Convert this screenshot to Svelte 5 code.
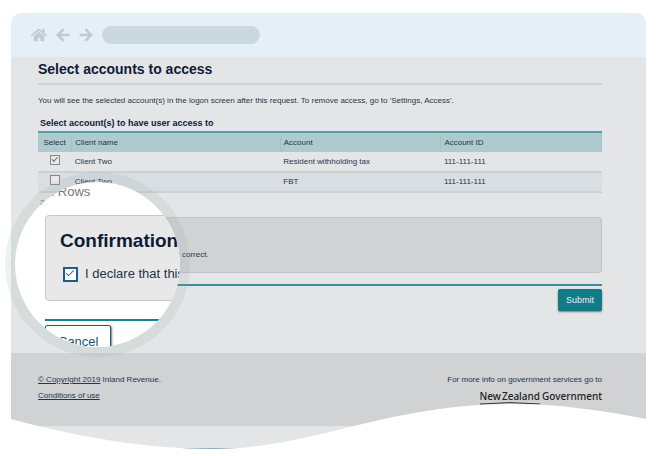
<script>
  const rows = [
    { id: 1, client: 'Client Two', account: 'Resident withholding tax', accountId: '111-111-111', selected: true },
    { id: 2, client: 'Client Two', account: 'FBT', accountId: '111-111-111', selected: false },
  ];

  let accounts = $state(rows);
  let declared = $state(true);
</script>

<div class="browser">
  <header class="toolbar">
    <button class="nav-button" aria-label="Home">
      <svg width="16" height="14" viewBox="0 32 576 448" fill="currentColor">
        <path d="M280.37 148.26L96 300.11V464a16 16 0 0 0 16 16l112.06-.29a16 16 0 0 0 15.92-16V368a16 16 0 0 1 16-16h64a16 16 0 0 1 16 16v95.64a16 16 0 0 0 16 16.05L464 480a16 16 0 0 0 16-16V300L295.67 148.26a12.19 12.19 0 0 0-15.3 0zM571.6 251.47L488 182.56V44.05a12 12 0 0 0-12-12h-56a12 12 0 0 0-12 12v72.61L318.47 43a48 48 0 0 0-61 0L4.34 251.47a12 12 0 0 0-1.6 16.9l25.5 31A12 12 0 0 0 45.15 301l235.22-193.74a12.19 12.19 0 0 1 15.3 0L530.9 301a12 12 0 0 0 16.9-1.6l25.5-31a12 12 0 0 0-1.7-16.93z" />
      </svg>
    </button>
    <button class="nav-button" aria-label="Back">
      <svg width="14" height="14" viewBox="0 0 14 14" fill="none" stroke="currentColor" stroke-width="2.5">
        <path d="M7.6 1.2 1.8 7l5.8 5.8M2 7h11.4" />
      </svg>
    </button>
    <button class="nav-button" aria-label="Forward">
      <svg width="14" height="14" viewBox="0 0 14 14" fill="none" stroke="currentColor" stroke-width="2.5">
        <path d="M6.4 1.2 12.2 7l-5.8 5.8M12 7H.6" />
      </svg>
    </button>
    <input class="address" type="text" aria-label="Address" />
  </header>

  <main class="page">
    <h1>Select accounts to access</h1>
    <p class="intro">
      You will see the selected account(s) in the logon screen after this request. To remove access, go to 'Settings, Access'.
    </p>

    <table>
      <caption>Select account(s) to have user access to</caption>
      <thead>
        <tr>
          <th class="col-select">Select</th>
          <th class="col-client">Client name</th>
          <th class="col-account">Account</th>
          <th>Account ID</th>
        </tr>
      </thead>
      <tbody>
        {#each accounts as row (row.id)}
          <tr>
            <td class="tick"><input type="checkbox" bind:checked={row.selected} aria-label={row.account} /></td>
            <td>{row.client}</td>
            <td>{row.account}</td>
            <td>{row.accountId}</td>
          </tr>
        {/each}
      </tbody>
    </table>
    <p class="count">2 Rows</p>

    <section class="panel" aria-label="Confirmation">
      <label>
        <input type="checkbox" bind:checked={declared} />
        I declare that this information is correct.
      </label>
    </section>

    <div class="actions">
      <button class="submit">Submit</button>
    </div>
  </main>

  <footer>
    <div class="legal">
      <span><a href="#copyright">© Copyright 2019</a> Inland Revenue.</span>
      <a href="#conditions">Conditions of use</a>
    </div>
    <div class="govt">
      <span>For more info on government services go to</span>
      <div class="logo">
        <span class="country"><span>New</span><span>Zealand</span>
          <svg viewBox="0 0 61 4" preserveAspectRatio="none" fill="none" stroke="#333" stroke-width="1">
            <path d="M0 3Q30 .2 61 3" />
          </svg>
        </span>
        <span>Government</span>
      </div>
    </div>
  </footer>
  <div class="page-end"></div>

  <!-- Wavy bottom edge of the page -->
  <svg class="wave" viewBox="0 0 635 52" preserveAspectRatio="none">
    <path fill="#fff" d="M0 19C70 38 140 49 201 49C245 49 280 41 319 32C380 17 430 4 504 4C545 4 590 10 635 19V52H0Z" />
  </svg>

  <!-- Magnifier over the confirmation panel -->
  <div class="lens">
    <div class="zoomed">
      <p class="zoomed-count">2 Rows</p>
      <section class="zoomed-panel">
        <h2>Confirmation</h2>
        <label>
          <input type="checkbox" bind:checked={declared} />
          I declare that this
        </label>
      </section>
      <div class="zoomed-actions">
        <button class="cancel">Cancel</button>
      </div>
    </div>
  </div>
</div>

<style>
  :global(body) {
    margin: 0;
    background: #fff;
  }

  .browser {
    position: relative;
    margin: 13px 13px 0 11px;
    font-family: "Liberation Sans", Arial, sans-serif;
    font-size: 8px;
    line-height: 12px;
    color: #27344a;
  }

  h1, h2, p {
    margin: 0;
  }

  button, input {
    font-family: inherit;
    margin: 0;
  }

  /* Browser bar */
  .toolbar {
    display: flex;
    align-items: center;
    height: 44px;
    padding: 0 20px;
    gap: 9px;
    background: #e5f0f6;
    border-radius: 10px 10px 0 0;
  }

  .nav-button {
    display: flex;
    padding: 0;
    border: 0;
    background: none;
    color: #bccbd4;
  }

  .address {
    width: 26.5%;
    height: 18px;
    box-sizing: border-box;
    padding: 0 9px;
    border: 0;
    border-radius: 9px;
    background: #cad8e1;
  }

  /* Page */
  .page {
    display: flex;
    flex-direction: column;
    padding: 0 44px 42px 27px;
    background: #e4e5e7;
  }

  h1 {
    padding: 3px 0 5px;
    border-bottom: 2px solid #d0d1d3;
    font-size: 14px;
    line-height: 18px;
    color: #0f1b36;
  }

  .intro {
    margin: 10px 0;
  }

  table {
    width: 100%;
    table-layout: fixed;
    border-collapse: collapse;
  }

  caption {
    padding: 0 2px 2px;
    text-align: left;
    font-size: 9px;
    font-weight: bold;
    color: #0f1b36;
  }

  th, td {
    box-sizing: border-box;
    height: 20px;
    padding: 0 3px;
  }

  th {
    border-top: 2px solid #55a0a8;
    border-right: 1px solid #a1c3c7;
    background: #aecace;
    text-align: left;
    font-weight: normal;
  }

  .col-select {
    width: 6%;
    text-align: center;
  }

  .col-client {
    width: 37%;
  }

  .col-account {
    width: 28.5%;
  }

  td {
    border-bottom: 2px solid #cdd1d4;
  }

  tbody tr:nth-child(even) {
    background: #d9dee3;
  }

  .tick {
    padding-bottom: 4px;
  }

  input[type="checkbox"] {
    appearance: none;
    display: block;
    flex: none;
    box-sizing: border-box;
    width: 10px;
    height: 10px;
    border: 1px solid #85898d;
    background: #e8e9ea;
  }

  .tick input {
    margin: 0 auto;
  }

  /* Tick mark */
  input[type="checkbox"]:checked::after {
    content: '';
    display: block;
    width: 66%;
    height: 30%;
    margin: 14% auto 0;
    border: solid #596168;
    border-width: 0 0 1px 1px;
    transform: rotate(-45deg);
  }

  .count {
    margin: 4px 2px 8px;
    color: #777;
  }

  .panel {
    display: flex;
    align-items: flex-end;
    box-sizing: border-box;
    height: 56px;
    padding: 11px 12px;
    border: 1px solid #c3c4c6;
    border-radius: 3px;
    background: #d1d2d4;
  }

  label {
    display: flex;
    align-items: center;
    gap: 8px;
  }

  .actions {
    display: flex;
    justify-content: flex-end;
    margin-top: 11px;
    padding-top: 3px;
    border-top: 2px solid #3d8e98;
  }

  .submit {
    padding: 5px 8px;
    border: 0;
    border-radius: 2px;
    background: #117b87;
    box-shadow: 0 1px 2px #777;
    font-size: 9px;
    line-height: 12px;
    color: #e9f4f5;
  }

  /* Footer */
  footer {
    display: flex;
    justify-content: space-between;
    box-sizing: border-box;
    min-height: 73px;
    padding: 21px 44px 0 27px;
    background: #d1d2d4;
  }

  footer a {
    color: inherit;
  }

  .legal, .govt {
    display: flex;
    flex-direction: column;
    gap: 4px;
  }

  .govt {
    align-items: flex-end;
  }

  .logo {
    display: flex;
    gap: 2px;
    font-family: "Noto Sans", "Open Sans", sans-serif;
    font-size: 10px;
    font-weight: 500;
    line-height: 12px;
    color: #222;
  }

  .country {
    position: relative;
    display: flex;
    gap: 1px;
  }

  .country svg {
    position: absolute;
    left: 0;
    top: 11px;
    width: 100%;
    height: 4px;
  }

  .page-end {
    height: 22px;
    border-bottom: 2px solid #8aa8c0;
    background: #e4e5e7;
  }

  .wave {
    position: absolute;
    left: 0;
    bottom: -2px;
    width: 100%;
    height: 52px;
  }

  /* Magnifier */
  .lens {
    position: absolute;
    left: -6px;
    top: 159px;
    width: 165px;
    height: 165px;
    border: 10px solid rgba(145, 165, 160, 0.16);
    border-radius: 50%;
    background: #fff;
    background-clip: padding-box;
    overflow: hidden;
  }

  .zoomed {
    width: 240px;
    padding-left: 30px;
    font-size: 13px;
    line-height: 16px;
  }

  .zoomed-count {
    padding: 2px 2px 15px;
    color: #777;
  }

  .zoomed-panel {
    padding: 14px 14px 18px;
    border: 1px solid #c6c7c8;
    border-radius: 4px;
    background: #e8e8e8;
  }

  .zoomed-panel h2 {
    margin-bottom: 14px;
    font-size: 19px;
    line-height: 22px;
    color: #0f1b36;
  }

  .zoomed-panel label {
    margin-left: 3px;
    gap: 7px;
  }

  .zoomed-panel input[type="checkbox"] {
    width: 15px;
    height: 15px;
    border: 2px solid #1d5c8c;
    background: #fff;
  }

  .zoomed-actions {
    margin-top: 18px;
    padding-top: 4px;
    border-top: 2px solid #128391;
  }

  .cancel {
    padding: 8px 12px;
    border: 1px solid #1d5c7c;
    border-radius: 2px;
    background: #fff;
    box-shadow: 1px 1px 2px #777;
    font-size: 13px;
    line-height: 16px;
    color: #1d5277;
  }
</style>
